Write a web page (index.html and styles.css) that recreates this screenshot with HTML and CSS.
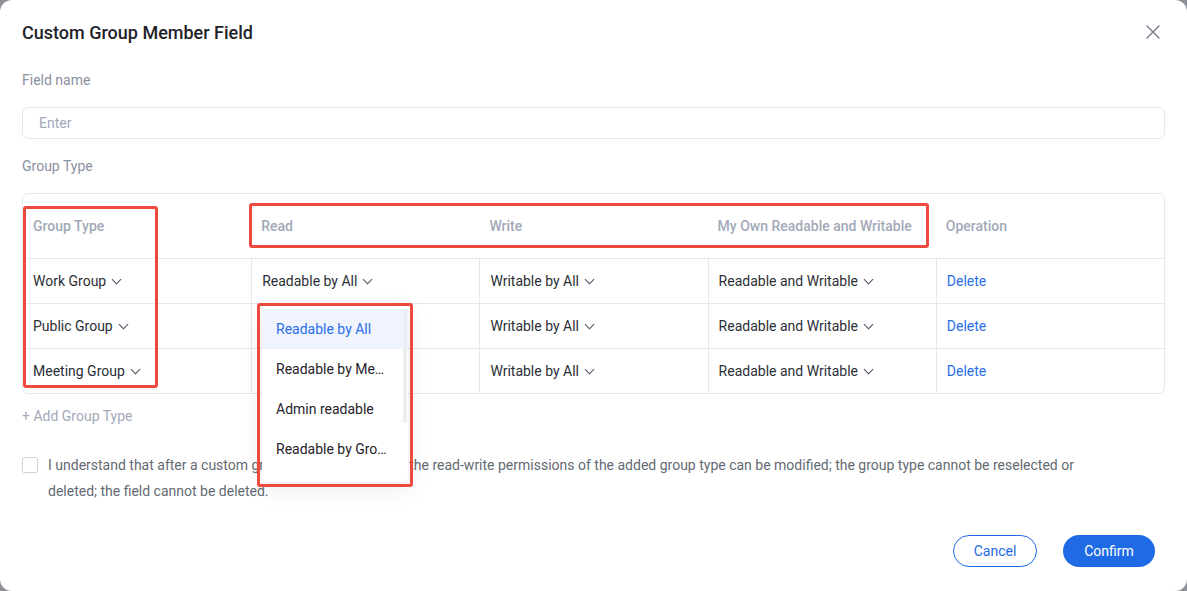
FILE: index.html
```html
<!DOCTYPE html>
<html lang="en">

<head>
  <meta charset="UTF-8">
  <meta name="viewport" content="width=device-width, initial-scale=1.0">
  <title>Custom Group Member Field</title>
  <link rel="stylesheet" href="styles.css">
</head>

<body>
  <div class="modal">
    <div class="modal-header">
      <h1 class="modal-title">Custom Group Member Field</h1>
      <button class="close-btn" title="Close">
        <svg width="14" height="14" viewBox="0 0 14 14"><path d="M1 1L13 13M13 1L1 13" stroke="#737a87" stroke-width="1.4" stroke-linecap="round" fill="none"/></svg>
      </button>
    </div>

    <div class="form-label first">Field name</div>
    <input class="text-input" type="text" placeholder="Enter">

    <div class="form-label">Group Type</div>
    <div class="perm-table">
      <div class="row head">
        <div class="cell">Group Type</div>
        <div class="cell">Read</div>
        <div class="cell">Write</div>
        <div class="cell">My Own Readable and Writable</div>
        <div class="cell">Operation</div>
      </div>
      <div class="row">
        <div class="cell select">Work Group<i class="chev"></i></div>
        <div class="cell select">Readable by All<i class="chev"></i></div>
        <div class="cell select">Writable by All<i class="chev"></i></div>
        <div class="cell select">Readable and Writable<i class="chev"></i></div>
        <div class="cell"><a class="link">Delete</a></div>
      </div>
      <div class="row">
        <div class="cell select">Public Group<i class="chev"></i></div>
        <div class="cell"></div>
        <div class="cell select">Writable by All<i class="chev"></i></div>
        <div class="cell select">Readable and Writable<i class="chev"></i></div>
        <div class="cell"><a class="link">Delete</a></div>
      </div>
      <div class="row">
        <div class="cell select">Meeting Group<i class="chev"></i></div>
        <div class="cell"></div>
        <div class="cell select">Writable by All<i class="chev"></i></div>
        <div class="cell select">Readable and Writable<i class="chev"></i></div>
        <div class="cell"><a class="link">Delete</a></div>
      </div>
    </div>

    <div class="add-type">+ Add Group Type</div>

    <label class="agree">
      <span class="checkbox"></span>
      <span class="agree-text">I understand that after a custom group type is added, only the read-write permissions of the added group type can be modified; the group type cannot be reselected or deleted; the field cannot be deleted.</span>
    </label>

    <div class="footer">
      <button class="btn-cancel">Cancel</button>
      <button class="btn-confirm">Confirm</button>
    </div>

    <!-- read permission dropdown, open on first row -->
    <div class="dropdown">
      <div class="option active">Readable by All</div>
      <div class="option">Readable by Me…</div>
      <div class="option">Admin readable</div>
      <div class="option">Readable by Gro…</div>
      <span class="scroll-thumb"></span>
    </div>

    <!-- highlight marks -->
    <div class="mark mark-type"></div>
    <div class="mark mark-head"></div>
    <div class="mark mark-menu"></div>
  </div>
</body>

</html>
```

FILE: styles.css
```css
body {
  margin: 0;
  background-color: #8f9299;
  font-family: Roboto, 'Noto Sans', sans-serif;
  font-size: 14px;
  color: #1f2329;
}

.modal {
  position: relative;
  box-sizing: border-box;
  width: 1187px;
  height: 591px;
  background: white;
  border-radius: 12px;
  padding: 20px 22px 0;
}

.modal-header {
  display: flex;
  align-items: center;
  justify-content: space-between;
  height: 24px;
}

.modal-title {
  margin: 0;
  font-size: 18px;
  font-weight: 500;
  color: #1f2329;
}

.close-btn {
  border: none;
  background: none;
  padding: 0;
  margin-right: 5px;
  width: 14px;
  height: 14px;
  cursor: pointer;
}

.form-label {
  margin-top: 16px;
  line-height: 22px;
  color: #8a919f;
}

.form-label.first {
  margin-top: 25px;
}

.text-input {
  display: block;
  box-sizing: border-box;
  width: 100%;
  height: 32px;
  margin-top: 16px;
  padding: 0 16px;
  border: 1px solid #e6e8f0;
  border-radius: 6px;
  font-family: inherit;
  font-size: 14px;
  outline: none;
}

.text-input::placeholder {
  color: #a3aab8;
}

.perm-table {
  margin-top: 16px;
  border: 1px solid #e6e8f0;
  border-radius: 6px;
  overflow: hidden;
}

.row {
  display: grid;
  grid-template-columns: repeat(5, 1fr);
  height: 44px;
  border-top: 1px solid #e6e8f0;
}

.row.head {
  height: 64px;
  border-top: none;
}

.cell {
  display: flex;
  align-items: center;
  padding: 0 10px;
  border-left: 1px solid #e6e8f0;
  color: #2b2f36;
  white-space: nowrap;
}

.cell:first-child,
.head .cell {
  border-left: none;
}

.head .cell {
  color: #a2a9b8;
  font-weight: 500;
}

.chev {
  display: inline-block;
  width: 6px;
  height: 6px;
  margin: -4px 0 0 7px;
  border-right: 1.2px solid #4e5562;
  border-bottom: 1.2px solid #4e5562;
  transform: rotate(45deg);
}

.link {
  color: #2a6ee8;
  cursor: pointer;
}

.add-type {
  margin-top: 11px;
  line-height: 22px;
  color: #a3aab8;
}

.agree {
  display: flex;
  align-items: flex-start;
  gap: 10px;
  margin-top: 25px;
  line-height: 26px;
  color: #646a73;
}

.agree-text {
  max-width: 1050px;
}

.checkbox {
  flex: none;
  box-sizing: border-box;
  width: 16px;
  height: 16px;
  margin-top: 5px;
  border: 1px solid #cfd3da;
  border-radius: 2px;
}

.footer {
  display: flex;
  justify-content: flex-end;
  gap: 26px;
  margin-top: 31px;
  padding-right: 10px;
}

.footer button {
  height: 32px;
  border-radius: 16px;
  font-family: inherit;
  font-size: 14px;
  cursor: pointer;
}

.btn-cancel {
  width: 84px;
  background: white;
  border: 1px solid #1f6be6;
  color: #1f6be6;
}

.btn-confirm {
  width: 92px;
  background: #1f6be6;
  border: none;
  color: white;
}

.dropdown {
  position: absolute;
  left: 262px;
  top: 305px;
  width: 146px;
  height: 177px;
  box-sizing: border-box;
  padding-top: 4px;
  background: white;
  border-radius: 6px;
  box-shadow: 0 6px 24px rgba(31, 35, 41, 0.1);
  overflow: hidden;
}

.option {
  height: 40px;
  line-height: 40px;
  padding: 0 14px;
  white-space: nowrap;
  color: #1f2329;
}

.option.active {
  background: #f0f4ff;
  color: #2a6ee8;
}

.scroll-thumb {
  position: absolute;
  right: 1px;
  top: 4px;
  width: 4px;
  height: 114px;
  border-radius: 2px;
  background: #eceef1;
}

.mark {
  position: absolute;
  border: 3px solid #ec4a3f;
  border-radius: 3px;
}

.mark-type {
  left: 23px;
  top: 206px;
  width: 129px;
  height: 176px;
}

.mark-head {
  left: 249px;
  top: 203px;
  width: 674px;
  height: 39px;
}

.mark-menu {
  left: 257px;
  top: 303px;
  width: 150px;
  height: 178px;
}
```
